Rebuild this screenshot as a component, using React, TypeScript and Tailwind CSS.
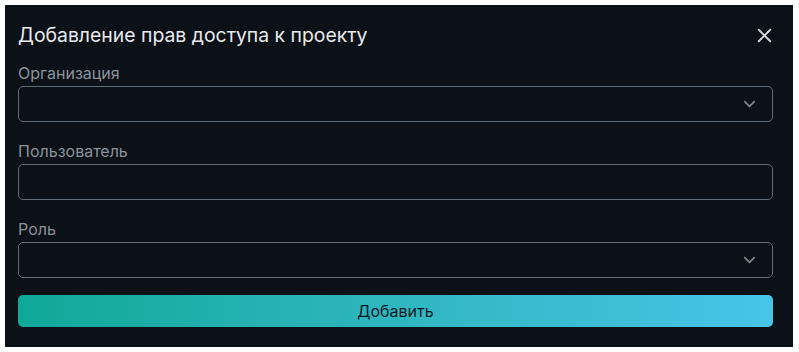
import { ChevronDown, X } from "lucide-react"

function Field({ label, select }: { label: string; select?: boolean }) {
  return (
    <div className="flex flex-col gap-[3px]">
      <label className="text-[16px] leading-5 text-[#8b939c]">{label}</label>
      <div className="relative h-9 rounded-[5px] border border-[#5f6b77]">
        {select && (
          <ChevronDown
            className="absolute right-[13px] top-1/2 h-[19px] w-[19px] -translate-y-1/2 text-[#7e8a96]"
            strokeWidth={2}
          />
        )}
      </div>
    </div>
  )
}

export default function App() {
  return (
    <div className="h-[352px] w-[799px] bg-white p-[5px] pr-[6px]" style={{ fontFamily: "Inter, 'Noto Sans', sans-serif" }}>
      <div className="flex h-[342px] flex-col bg-[#0c1017] px-[13px] pb-5 pt-4 pr-[20px]">
        <div className="flex items-center justify-between">
          <h2 className="text-[19.4px] leading-7 text-[#e8eaec]">Добавление прав доступа к проекту</h2>
          <X className="-mr-[3px] h-[23px] w-[23px] text-[#d6d9dc]" strokeWidth={2} />
        </div>

        <div className="mt-[14px] flex flex-col gap-[19px]">
          <Field label="Организация" select />
          <Field label="Пользователь" />
          <Field label="Роль" select />
        </div>

        <button className="mt-[17px] h-8 rounded-[5px] bg-gradient-to-r from-[#0ea898] to-[#46c5e8] text-[16px] text-[#0b1a22]">
          Добавить
        </button>
      </div>
    </div>
  )
}
